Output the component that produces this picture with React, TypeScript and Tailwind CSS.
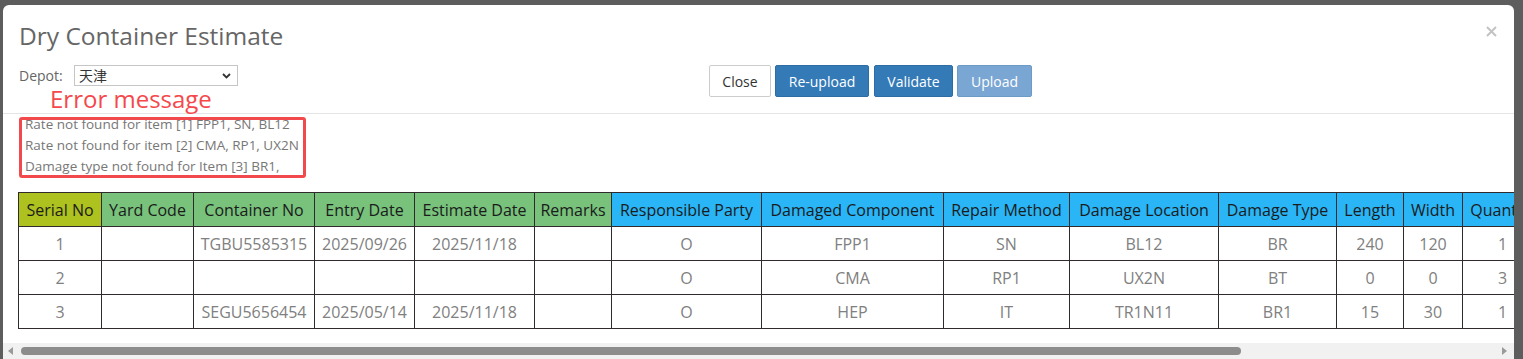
import React from "react";

type Col = { label: string; w: number; bg: string };

const SERIAL = "bg-[#adc11f]";
const GREEN = "bg-[#78c27b]";
const BLUE = "bg-[#29b5f6]";

const cols: Col[] = [
  { label: "Serial No", w: 83, bg: SERIAL },
  { label: "Yard Code", w: 92, bg: GREEN },
  { label: "Container No", w: 121, bg: GREEN },
  { label: "Entry Date", w: 100, bg: GREEN },
  { label: "Estimate Date", w: 120, bg: GREEN },
  { label: "Remarks", w: 77, bg: GREEN },
  { label: "Responsible Party", w: 150, bg: BLUE },
  { label: "Damaged Component", w: 182, bg: BLUE },
  { label: "Repair Method", w: 126, bg: BLUE },
  { label: "Damage Location", w: 149, bg: BLUE },
  { label: "Damage Type", w: 118, bg: BLUE },
  { label: "Length", w: 67, bg: BLUE },
  { label: "Width", w: 59, bg: BLUE },
  { label: "Quantity", w: 80, bg: BLUE },
  { label: "Labor Hours", w: 105, bg: BLUE },
  { label: "Material Cost", w: 115, bg: BLUE },
  { label: "Labor Cost", w: 100, bg: BLUE },
];

const rows: string[][] = [
  ["1", "", "TGBU5585315", "2025/09/26", "2025/11/18", "", "O", "FPP1", "SN", "BL12", "BR", "240", "120", "1", "0.5", "0", "0"],
  ["2", "", "", "", "", "", "O", "CMA", "RP1", "UX2N", "BT", "0", "0", "3", "0.5", "0", "0"],
  ["3", "", "SEGU5656454", "2025/05/14", "2025/11/18", "", "O", "HEP", "IT", "TR1N11", "BR1", "15", "30", "1", "0.5", "0", "0"],
];

const totalW = cols.reduce((a, c) => a + c.w, 0);

export default function App() {
  return (
    <div className="h-[359px] w-[1523px] overflow-hidden bg-[#5d5d5d] pl-[3px] pt-[5px] font-['Open_Sans','Noto_Sans_CJK_SC',sans-serif]">
      <div className="relative flex h-[354px] w-[1511px] flex-col overflow-hidden rounded-t-[6px] bg-white">
        {/* Header */}
        <div className="relative h-[109px] shrink-0 border-b border-[#e5e5e5] pl-[16px] pt-[14px]">
          <h4 className="text-[24.5px] leading-[33px] text-[#666666]">Dry Container Estimate</h4>
          <div className="mt-[13px] flex items-start">
            <div className="flex h-[21px] w-[690px] items-center">
              <span className="w-[55px] text-[14px] text-[#666666]">Depot:</span>
              <div className="flex h-[21px] w-[164px] items-center justify-between border border-[#c6c6c6] pl-[4px] pr-[5px] text-[14px] leading-none text-[#333333]">
                <span>天津</span>
                <svg width="9" height="6" viewBox="0 0 9 6" className="mr-[1px]">
                  <polyline points="1,1 4.5,4.5 8,1" fill="none" stroke="#333" strokeWidth="1.8" />
                </svg>
              </div>
            </div>
            <div className="flex">
              <button className="flex h-[32px] w-[62px] items-center justify-center rounded-[2px] border border-[#cccccc] bg-white text-[14px] text-[#333333]">
                Close
              </button>
              <button className="ml-[4px] flex h-[32px] w-[94px] items-center justify-center rounded-[2px] border border-[#2e6da4] bg-[#337ab7] text-[14px] text-white">
                Re-upload
              </button>
              <button className="ml-[5px] flex h-[32px] w-[79px] items-center justify-center rounded-[2px] border border-[#2e6da4] bg-[#337ab7] text-[14px] text-white">
                Validate
              </button>
              <button className="ml-[4px] flex h-[32px] w-[75px] items-center justify-center rounded-[2px] border border-[#6d9bc8] bg-[#7aa6d3] text-[14px] text-white">
                Upload
              </button>
            </div>
          </div>
          <button className="absolute right-[17px] top-[21px]">
            <svg width="11" height="11" viewBox="0 0 11 11">
              <line x1="1" y1="1" x2="10" y2="10" stroke="#c2c2c2" strokeWidth="2" />
              <line x1="10" y1="1" x2="1" y2="10" stroke="#c2c2c2" strokeWidth="2" />
            </svg>
          </button>
        </div>

        {/* Body */}
        <div className="flex-1 overflow-hidden pl-[15px]">
          <div className="pl-[7px] text-[13.5px] leading-[21px] text-[#777777]">
            <div>Rate not found for item [1] FPP1, SN, BL12</div>
            <div>Rate not found for item [2] CMA, RP1, UX2N</div>
            <div>Damage type not found for Item [3] BR1,</div>
          </div>
          <table
            className="mt-[15px] table-fixed border-collapse"
            style={{ width: totalW }}
          >
            <colgroup>
              {cols.map((c) => (
                <col key={c.label} style={{ width: c.w }} />
              ))}
            </colgroup>
            <thead>
              <tr className="h-[34px]">
                {cols.map((c) => (
                  <th
                    key={c.label}
                    className={`${c.bg} overflow-hidden whitespace-nowrap border border-[#2f2a2c] p-0 text-center text-[16px] font-normal text-[#1b1b1b]`}
                  >
                    {c.label}
                  </th>
                ))}
              </tr>
            </thead>
            <tbody>
              {rows.map((r, i) => (
                <tr key={i} className="h-[34px]">
                  {r.map((v, j) => (
                    <td
                      key={j}
                      className="overflow-hidden whitespace-nowrap border border-[#2f2a2c] p-0 text-center text-[16px] text-[#808080]"
                    >
                      {v}
                    </td>
                  ))}
                </tr>
              ))}
            </tbody>
          </table>
        </div>

        {/* Horizontal scrollbar */}
        <div className="flex h-[16px] shrink-0 items-center bg-[#f1f1f1] pl-[5px]">
          <svg width="5" height="8" viewBox="0 0 5 8">
            <polygon points="5,0 0,4 5,8" fill="#9a9a9a" />
          </svg>
          <div className="ml-[8px] h-[8px] w-[1220px] rounded-full bg-[#8c8c8c]" />
          <div className="flex-1" />
          <svg width="5" height="8" viewBox="0 0 5 8" className="mr-[7px]">
            <polygon points="0,0 5,4 0,8" fill="#9a9a9a" />
          </svg>
        </div>

        {/* Annotations */}
        <div className="pointer-events-none absolute left-[47px] top-[82px] text-[24px] leading-[24px] text-[#f5484b]">
          Error message
        </div>
        <div className="pointer-events-none absolute left-[16px] top-[112px] h-[61px] w-[287px] rounded-[3px] border-[3px] border-[#f24a4c]" />
      </div>
    </div>
  );
}
